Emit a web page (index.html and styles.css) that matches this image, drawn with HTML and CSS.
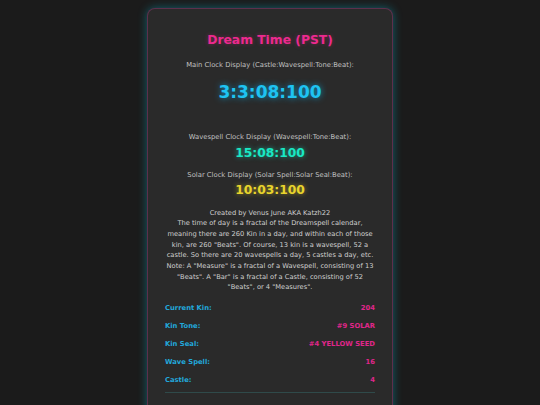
FILE: index.html
```html
<!DOCTYPE html>
<html>
<head>
<meta charset="utf-8">
<link rel="stylesheet" href="styles.css">
</head>
<body>
<div class="card">
  <h1 class="title">Dream Time (PST)</h1>
  <div class="label label-main">Main Clock Display (Castle:Wavespell:Tone:Beat):</div>
  <div class="clock clock-main">3:3:08:100</div>
  <div class="label label-wave">Wavespell Clock Display (Wavespell:Tone:Beat):</div>
  <div class="clock clock-wave">15:08:100</div>
  <div class="label label-solar">Solar Clock Display (Solar Spell:Solar Seal:Beat):</div>
  <div class="clock clock-solar">10:03:100</div>
  <p class="desc">Created by Venus June AKA Katzh22<br>The time of day is a fractal of the Dreamspell calendar, meaning there are 260 Kin in a day, and within each of those kin, are 260 "Beats". Of course, 13 kin is a wavespell, 52 a castle. So there are 20 wavespells a day, 5 castles a day, etc. Note: A "Measure" is a fractal of a Wavespell, consisting of 13 "Beats". A "Bar" is a fractal of a Castle, consisting of 52 "Beats", or 4 "Measures".</p>
  <div class="info">
    <div class="row"><span class="key">Current Kin:</span><span class="val">204</span></div>
    <div class="row"><span class="key">Kin Tone:</span><span class="val">#9 SOLAR</span></div>
    <div class="row"><span class="key">Kin Seal:</span><span class="val">#4 YELLOW SEED</span></div>
    <div class="row"><span class="key">Wave Spell:</span><span class="val">16</span></div>
    <div class="row"><span class="key">Castle:</span><span class="val">4</span></div>
  </div>
  <div class="divider"></div>
</div>
</body>
</html>
```

FILE: styles.css
```css
html, body {
  margin: 0;
  padding: 0;
  background: #1b1b1b;
}
body {
  padding-top: 8px;
  font-family: "DejaVu Sans", Verdana, sans-serif;
  color: #c8c8c8;
}
.card {
  width: 246px;
  box-sizing: border-box;
  margin: 0 auto;
  background: #2a2a2a;
  border: 1px solid rgba(190, 60, 140, 0.35);
  border-radius: 8px;
  box-shadow: 0 0 10px rgba(0, 200, 230, 0.4);
  padding: 24px 16px 40px;
  text-align: center;
}
.title {
  margin: 0;
  font-size: 12.3px;
  line-height: 15px;
  font-weight: bold;
  color: #ec2a8e;
  text-shadow: 0 0 4px rgba(236, 42, 142, 0.35);
}
.label {
  font-size: 6.8px;
  line-height: 10px;
  color: #c0c0c0;
  white-space: nowrap;
}
.label-main { margin-top: 12px; }
.label-wave { margin-top: 30px; }
.label-solar { margin-top: 8px; }
.clock {
  font-weight: bold;
  margin-top: 2.5px;
}
.clock-main {
  margin-top: 12px;
  font-size: 17px;
  line-height: 20px;
  color: #1ec3f2;
  text-shadow: 0 0 6px rgba(0, 191, 255, 0.7);
}
.clock-wave {
  font-size: 12.3px;
  line-height: 17px;
  color: #19e8c4;
  text-shadow: 0 0 5px rgba(25, 232, 196, 0.6);
}
.clock-solar {
  font-size: 12.3px;
  line-height: 17px;
  color: #e8d42c;
  text-shadow: 0 0 5px rgba(232, 212, 44, 0.55);
}
.desc {
  margin: 8.5px 0 0;
  font-size: 6.7px;
  line-height: 10.7px;
  color: #d0d0d0;
}
.info {
  margin-top: 5.4px;
  padding: 0 1px;
}
.row {
  display: flex;
  justify-content: space-between;
  height: 18px;
  align-items: center;
  font-size: 6.8px;
  font-weight: bold;
}
.key { color: #22a8db; }
.val { color: #e0268a; }
.divider {
  margin: 3.5px 1px 0;
  height: 1px;
  background: #2f4a4a;
}
```
